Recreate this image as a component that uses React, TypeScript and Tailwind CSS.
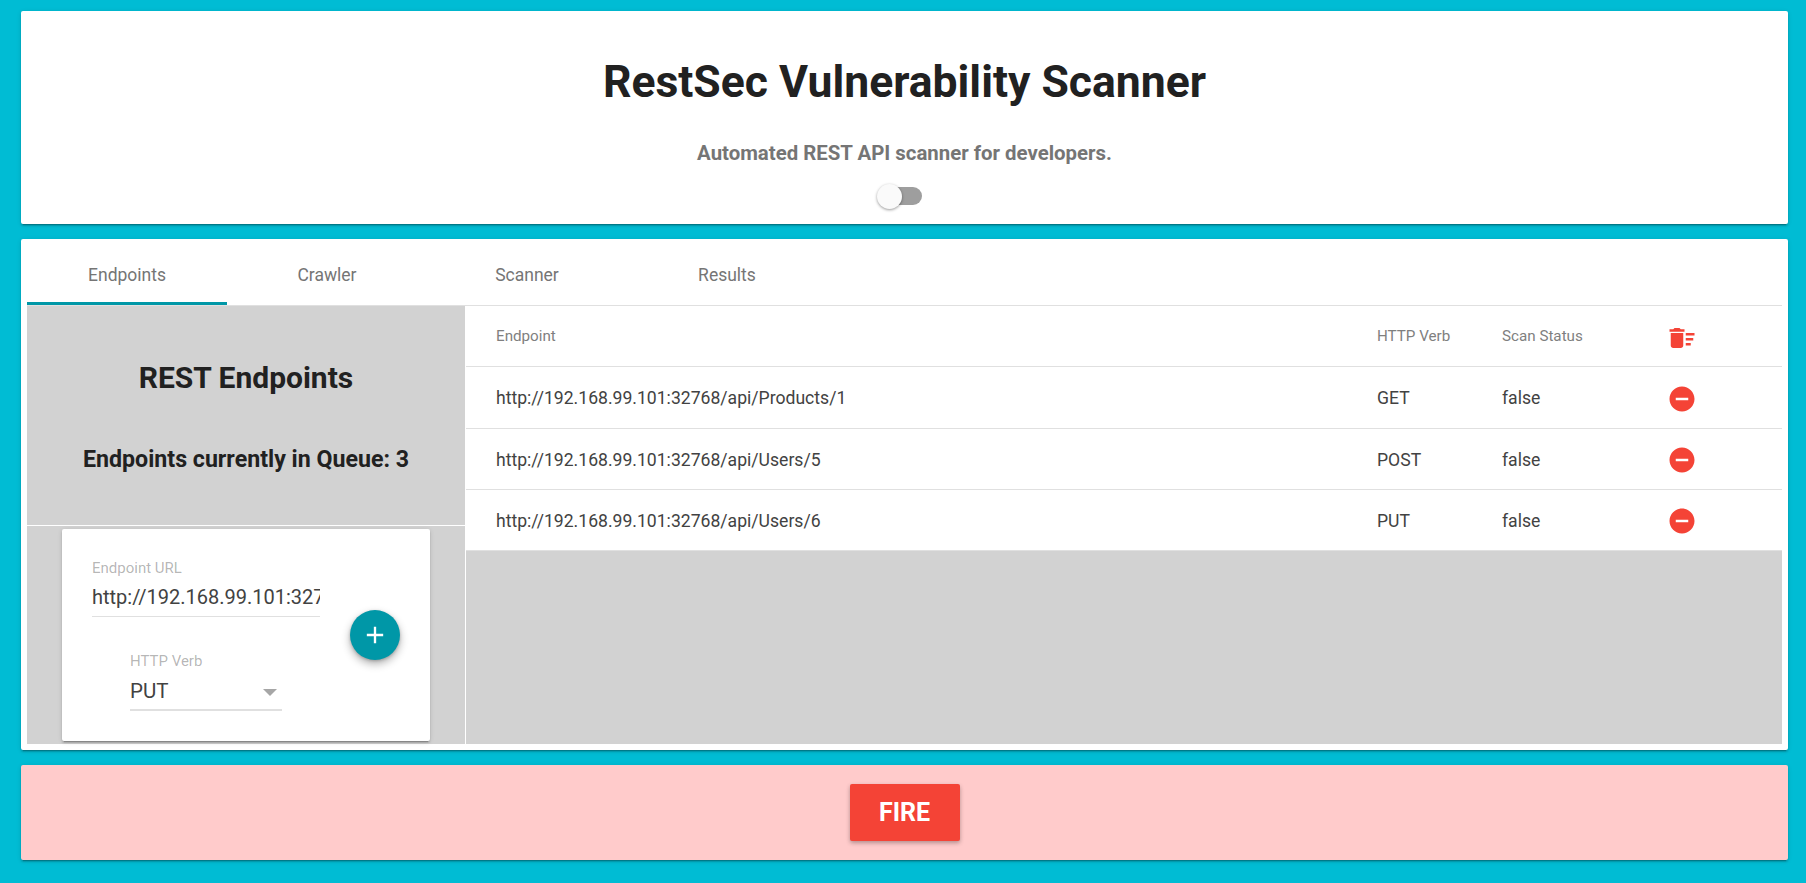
import { MdAdd, MdDeleteSweep, MdRemoveCircle } from "react-icons/md";

const tabs = ["Endpoints", "Crawler", "Scanner", "Results"];

const endpoints = [
  { url: "http://192.168.99.101:32768/api/Products/1", verb: "GET", status: "false" },
  { url: "http://192.168.99.101:32768/api/Users/5", verb: "POST", status: "false" },
  { url: "http://192.168.99.101:32768/api/Users/6", verb: "PUT", status: "false" },
];

const cardShadow = "shadow-[0_2px_2px_rgba(0,0,0,0.14),0_1px_5px_rgba(0,0,0,0.12),0_3px_1px_-2px_rgba(0,0,0,0.2)]";

function EndpointForm() {
  return (
    <div className={`ml-[35px] flex h-[212px] w-[368px] rounded-[2px] bg-white ${cardShadow}`}>
      <div className="w-[288px] pl-[30px] pt-[31px]">
        <label className="block text-[15px] leading-[16px] text-black/30">Endpoint URL</label>
        <input
          readOnly
          value="http://192.168.99.101:32768/api/Users/6"
          className="mt-[2px] h-[39px] w-[228px] border-b border-[#e0e0e0] text-[20px] text-[#424242] outline-none"
        />
        <div className="ml-[38px] mt-[36px] w-[152px]">
          <div className="text-[15px] leading-[16px] text-black/30">HTTP Verb</div>
          <div className="mt-[4px] flex h-[38px] items-center justify-between border-b-2 border-[#e0e0e0]">
            <span className="text-[20.5px] text-[#424242]">PUT</span>
            <span className="mr-[5px] mt-[2px] h-0 w-0 border-x-[7px] border-t-[7px] border-x-transparent border-t-[#a6a6a6]" />
          </div>
        </div>
      </div>
      <div className="pt-[81px]">
        <button className="flex h-[50px] w-[50px] items-center justify-center rounded-full bg-[#0097a7] text-white shadow-[0_4px_8px_rgba(0,0,0,0.3),0_1px_3px_rgba(0,0,0,0.2)]">
          <MdAdd size={28} />
        </button>
      </div>
    </div>
  );
}

function EndpointTable() {
  return (
    <div className="flex min-w-0 flex-1 flex-col bg-[#d2d2d2]">
      <div className="grid h-[61px] grid-cols-[881px_125px_167px_1fr] items-center border-b border-[#e0e0e0] bg-white pl-[30px] text-[15.2px] text-[#7f7f7f]">
        <span>Endpoint</span>
        <span>HTTP Verb</span>
        <span>Scan Status</span>
        <MdDeleteSweep size={30} className="ml-[-2px] mt-[3px] text-[#f44336]" />
      </div>
      {endpoints.map((e, i) => (
        <div
          key={e.url}
          className={`grid grid-cols-[881px_125px_167px_1fr] items-center border-b border-[#e0e0e0] bg-white pl-[30px] pt-[2px] text-[17.6px] text-[#424242] ${i === 0 ? "h-[62px]" : "h-[61px]"}`}
        >
          <span>{e.url}</span>
          <span>{e.verb}</span>
          <span>{e.status}</span>
          <MdRemoveCircle size={30} className="ml-[-2px] text-[#f44336]" />
        </div>
      ))}
    </div>
  );
}

export default function App() {
  return (
    <div className="flex h-[883px] flex-col bg-[#00bcd4] pl-[21px] pr-[18px] pt-[11px] font-['Roboto',sans-serif]">
      {/* Header */}
      <div className={`flex h-[213px] flex-col items-center rounded-[2px] bg-white ${cardShadow}`}>
        <h1 className="mt-[41px] text-[44.5px] font-bold leading-[60px] text-[#212121]">RestSec Vulnerability Scanner</h1>
        <p className="mt-[27px] text-[20.4px] font-bold leading-[28px] text-[#757575]">Automated REST API scanner for developers.</p>
        <div className="relative mr-[7px] mt-[20px] h-[18px] w-[42px] rounded-full bg-[#9e9e9e]">
          <span className="absolute left-[-3px] top-[-3px] h-[25px] w-[25px] rounded-full bg-[#fafafa] shadow-[0_1px_3px_rgba(0,0,0,0.4)]" />
        </div>
      </div>

      {/* Main panel */}
      <div className={`mt-[15px] h-[511px] rounded-[2px] bg-white px-[6px] pb-[6px] ${cardShadow}`}>
        <div className="flex h-[67px] border-b border-[#e0e0e0] text-[17.5px] text-[#757575]">
          {tabs.map((t, i) => (
            <div
              key={t}
              className={`flex h-[66px] w-[200px] items-center justify-center ${i === 0 ? "border-b-[3px] border-[#0097a7] pt-[9px]" : "pt-[6px]"}`}
            >
              {t}
            </div>
          ))}
        </div>
        <div className="flex h-[438px]">
          <div className="flex w-[439px] flex-col border-r border-white bg-[#d2d2d2]">
            <div className="flex h-[220px] flex-col items-center border-b border-white text-[#212121]">
              <h2 className="mt-[54px] text-[30px] font-bold leading-[36px]">REST Endpoints</h2>
              <h3 className="mt-[49px] text-[23.2px] font-bold leading-[28px]">Endpoints currently in Queue: 3</h3>
            </div>
            <div className="pt-[3px]">
              <EndpointForm />
            </div>
          </div>
          <EndpointTable />
        </div>
      </div>

      {/* Fire bar */}
      <div className={`mt-[15px] flex h-[95px] items-center justify-center rounded-[2px] bg-[#ffcbcb] ${cardShadow}`}>
        <button className="h-[57px] w-[110px] rounded-[2px] bg-[#f44336] text-[25px] font-bold text-white shadow-[0_2px_4px_rgba(0,0,0,0.3)]">
          FIRE
        </button>
      </div>
    </div>
  );
}
